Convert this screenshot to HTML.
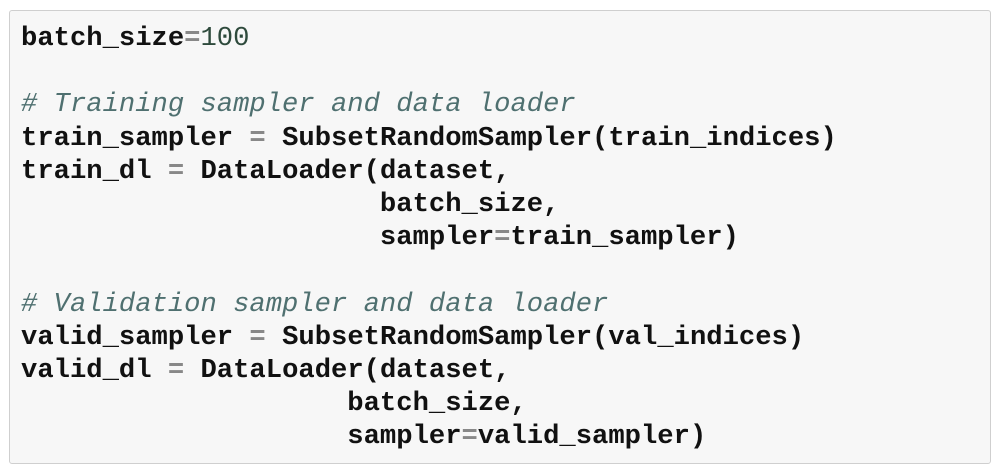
<!DOCTYPE html>
<html><head><style>
html,body{margin:0;padding:0;background:#fff;width:1000px;height:475px;overflow:hidden}
.box{position:absolute;left:9px;top:10px;width:980px;height:452px;border:1px solid #cfcfcf;border-radius:3px;background:#f7f7f7}
pre{position:absolute;left:11px;top:11px;margin:0;font-family:"Liberation Mono",monospace;font-weight:bold;font-size:27.2px;line-height:33.2px;color:#111}
.c{color:#4f7070;font-style:italic;font-weight:normal}
.o{color:#888}
.n{color:#2e4a3c;font-weight:normal}
</style></head><body>
<div class="box"><pre>batch_size<span class="o">=</span><span class="n">100</span>

<span class="c"># Training sampler and data loader</span>
train_sampler <span class="o">=</span> SubsetRandomSampler(train_indices)
train_dl <span class="o">=</span> DataLoader(dataset,
                      batch_size,
                      sampler<span class="o">=</span>train_sampler)

<span class="c"># Validation sampler and data loader</span>
valid_sampler <span class="o">=</span> SubsetRandomSampler(val_indices)
valid_dl <span class="o">=</span> DataLoader(dataset,
                    batch_size,
                    sampler<span class="o">=</span>valid_sampler)</pre></div>
</body></html>
